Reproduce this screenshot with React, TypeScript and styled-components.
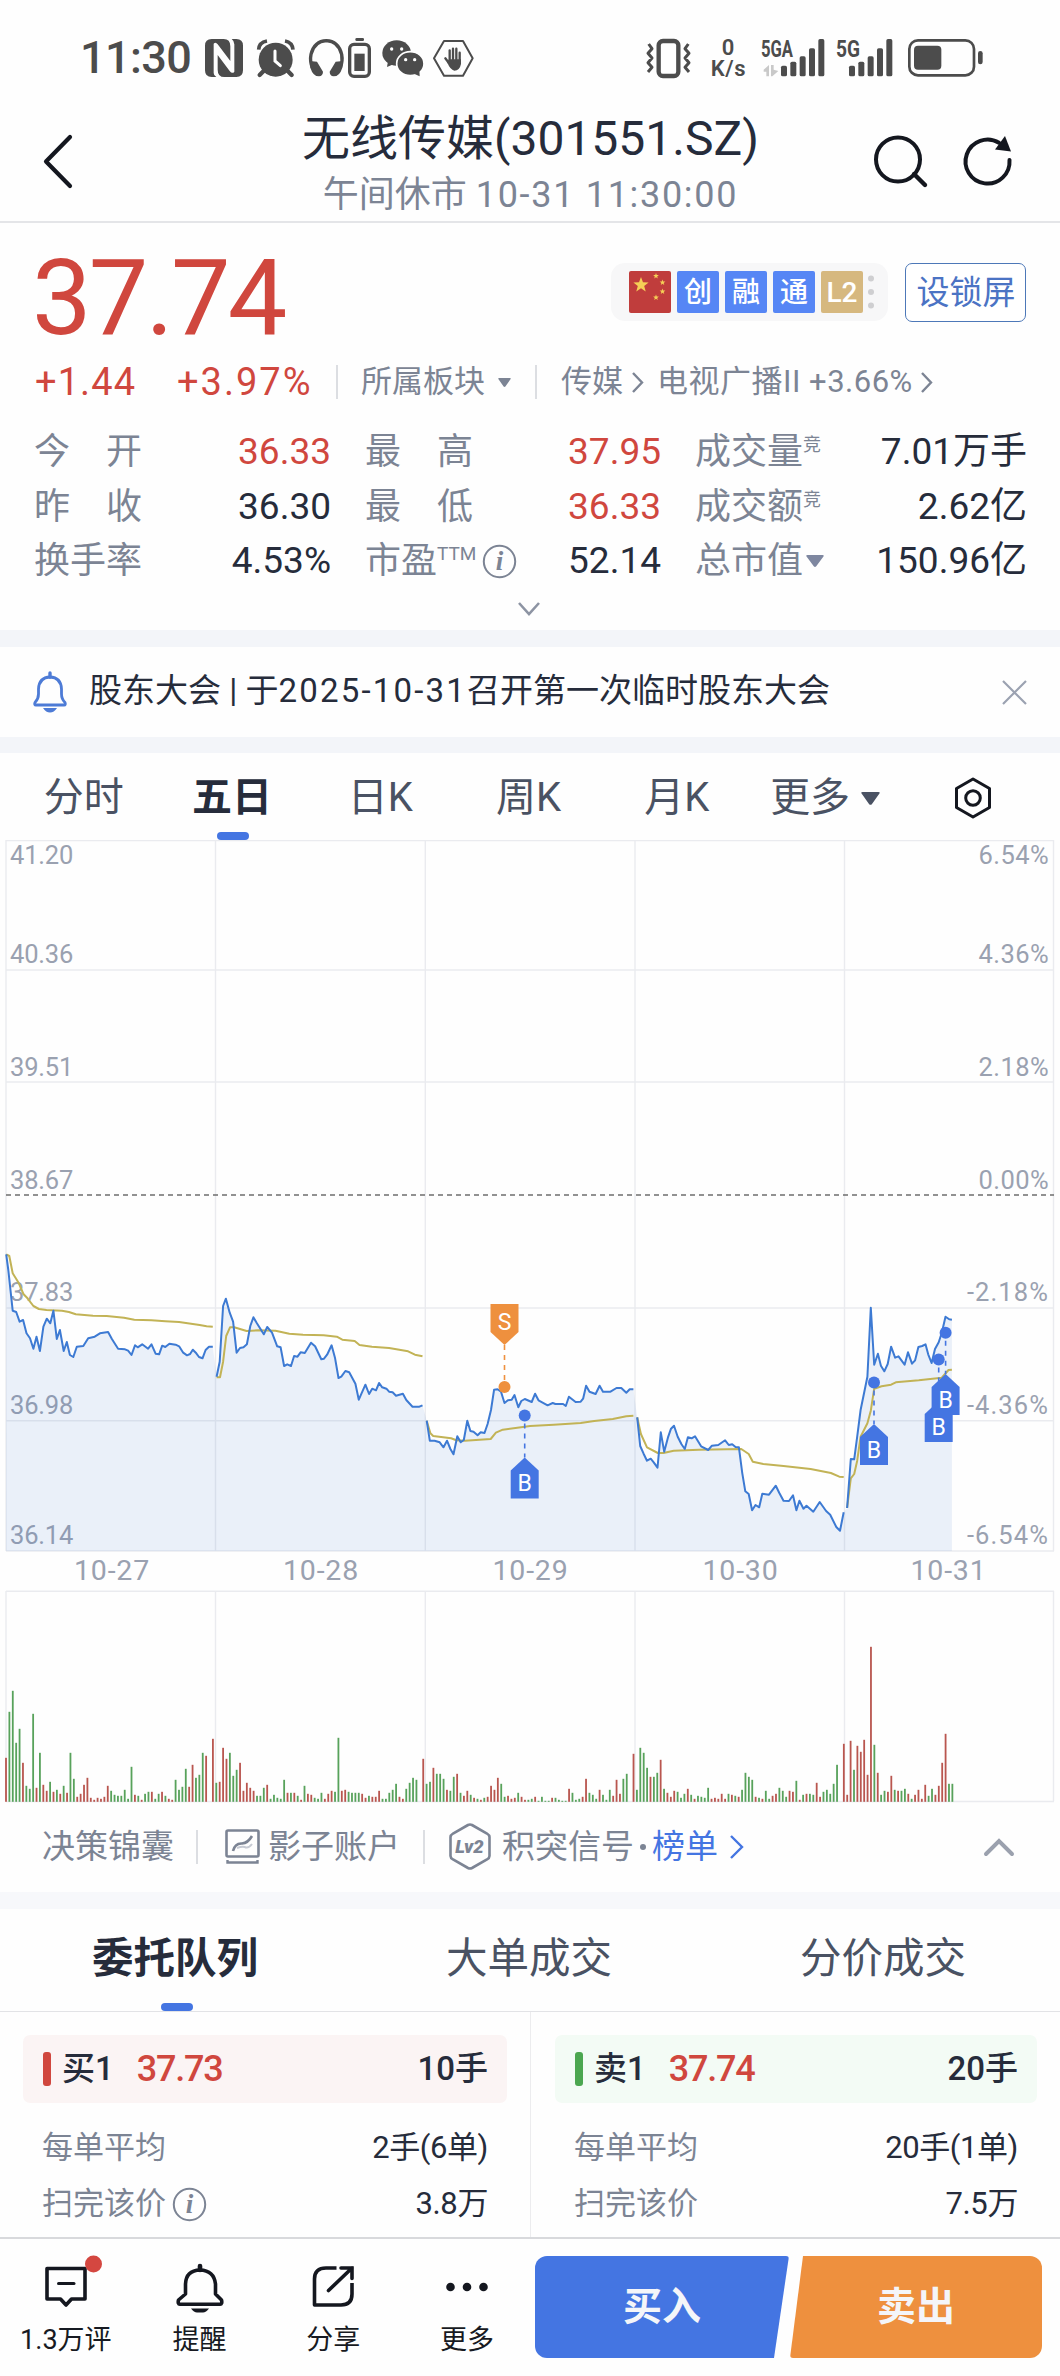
import React from 'react';
import styled, { createGlobalStyle, css } from 'styled-components';

const INK = '#262c3b';
const SLATE = '#4a5263';
const MUTED = '#7c8494';
const FAINT = '#9aa1b0';
const RED = '#d0473e';
const BLUE = '#4475e2';
const ORANGE = '#ee903e';
const GRID = '#eaebef';

const GlobalStyle = createGlobalStyle`
  *, *::before, *::after { box-sizing: border-box; }
  body { margin: 0; background: #fff; }
`;

const Page = styled.main`
  width: 1060px;
  height: 2376px;
  overflow: hidden;
  background: #fefefe;
  color: ${INK};
  font-family: Roboto, 'Noto Sans CJK SC', sans-serif;
  display: flex;
  flex-direction: column;
  white-space: nowrap;
`;

const Ico = styled.svg<{ $ml?: number }>`
  display: block;
  flex: none;
  overflow: visible;
  margin-left: ${(p) => p.$ml ?? 0}px;
`;

const Num = styled.span<{ $ls?: number; $ml?: number }>`
  letter-spacing: ${(p) => p.$ls ?? 1}px;
  margin-left: ${(p) => p.$ml ?? 0}px;
`;

/* ---------- status bar ---------- */

const StatusBar = styled.header`
  height: 116px;
  flex: none;
  display: flex;
  align-items: center;
  padding: 0 77px 0 80px;
  color: #4c4c4c;
`;

const Clock = styled.span`
  width: 125px;
  font-size: 45px;
  line-height: 50px;
  font-weight: 500;
  letter-spacing: -0.6px;
`;

const StatusRight = styled.div`
  margin-left: auto;
  display: flex;
  align-items: center;
`;

const Speed = styled.div`
  width: 40px;
  margin-left: 17px;
  display: flex;
  flex-direction: column;
  align-items: center;
  font-size: 22px;
  line-height: 21px;
  font-weight: 600;
  letter-spacing: 0.6px;
`;

const D = '#4c4c4c';

const Signal = ({ label, w, ml, arrows }: { label: string; w: number; ml: number; arrows?: boolean }) => {
  const bars = [32, 44, 60, 84, 112];
  const start = w - 130;
  return (
    <Ico $ml={ml} width={w / 3} height={38} viewBox={`0 0 ${w} 114`}>
      <text x="0" y="54" fontSize="70" fontWeight="700" fill={D} textLength={label.length * 32 + (arrows ? 0 : 8)} lengthAdjust="spacingAndGlyphs">{label}</text>
      {arrows && <path d="M8 92 L24 78 V112 H16 V98 H8 Z M30 78 H38 V92 L52 96 L34 112 H30 Z" fill="#c9c9c9" />}
      {bars.map((h, i) => (
        <rect key={i} x={start + i * 28} y={112 - h} width="18" height={h} rx="5" fill={D} />
      ))}
    </Ico>
  );
};

const Status = () => (
  <StatusBar>
    <Clock>11:30</Clock>
    <Ico width={38} height={38} viewBox="0 0 114 114">
      <path d="M20 0 H56 Q76 0 76 22 V66 L38 16 Q32 8 26 14 V102 Q26 110 34 114 H20 Q0 114 0 94 V20 Q0 0 20 0 Z" fill={D} />
      <path d="M80 0 H94 Q114 0 114 20 V94 Q114 114 94 114 H58 Q38 114 38 92 V48 L74 96 Q82 106 88 98 V16 Q88 6 80 0 Z" fill={D} />
    </Ico>
    <Ico $ml={14} width={38} height={38} viewBox="0 0 114 114">
      <circle cx="56" cy="62" r="51" fill={D} />
      <path d="M5 32 Q6 10 30 6 M84 6 Q106 10 108 32" fill="none" stroke={D} strokeWidth="11" />
      <path d="M22 94 L8 108 M90 94 L104 108" stroke={D} strokeWidth="13" strokeLinecap="round" />
      <path d="M54 36 V66 L70 80" fill="none" stroke="#fff" strokeWidth="9" strokeLinecap="round" />
    </Ico>
    <Ico $ml={14} width={35} height={38} viewBox="0 0 105 114">
      <path d="M10 86 Q2 66 6 46 Q16 6 52 5 Q88 6 98 46 Q102 66 94 86" fill="none" stroke={D} strokeWidth="10" />
      <path d="M2 66 L24 68 L42 98 Q42 110 30 112 Q12 112 4 86 Z M102 66 L80 68 L62 98 Q62 110 74 112 Q92 112 100 86 Z" fill={D} />
    </Ico>
    <Ico $ml={4} width={23} height={40} viewBox="0 0 69 120">
      <rect x="22" y="0" width="26" height="9" rx="4" fill={D} />
      <rect x="5" y="19" width="59" height="96" rx="13" fill="none" stroke={D} strokeWidth="10" />
      <rect x="19" y="47" width="31" height="52" fill={D} />
    </Ico>
    <Ico $ml={11} width={41} height={38} viewBox="0 0 123 114">
      <ellipse cx="44" cy="42" rx="43" ry="38" fill={D} />
      <path d="M18 66 L15 84 L38 74 Z" fill={D} />
      <ellipse cx="85" cy="74" rx="41" ry="36" fill={D} stroke="#fff" strokeWidth="5" />
      <path d="M96 104 L113 112 L112 92 Z" fill={D} />
      <g fill="#fff"><circle cx="29" cy="30" r="5" /><circle cx="59" cy="30" r="5" /><circle cx="71" cy="62" r="5" /><circle cx="98" cy="62" r="5" /></g>
    </Ico>
    <Ico $ml={10} width={41} height={37} viewBox="0 0 123 111">
      <path d="M33 3 H90 L119 55 L90 107 H33 L3 55 Z" fill="none" stroke={D} strokeWidth="6" strokeLinejoin="round" />
      <path d="M37 55 L47 68 M50 62 V31 M60 60 V26 M70 60 V26 M80 62 V38" fill="none" stroke={D} strokeWidth="7" strokeLinecap="round" />
      <path d="M42 60 L47 62 V58 H84 V72 Q80 92 64 92 Q52 90 42 66 Z" fill={D} />
    </Ico>
    <StatusRight>
      <Ico width={45} height={39} viewBox="0 0 135 117">
        <rect x="38" y="6" width="59" height="105" rx="13" fill="none" stroke={D} strokeWidth="13" />
        <path d="M8 15 L18 29 L6 43 L18 57 L6 71 L18 85 L6 99 M127 15 L117 29 L129 43 L117 57 L129 71 L117 85 L129 99" fill="none" stroke={D} strokeWidth="9" strokeLinejoin="round" />
      </Ico>
      <Speed><span>0</span><span>K/s</span></Speed>
      <Signal label="5GA" w={190} ml={13} arrows />
      <Signal label="5G" w={169} ml={11} />
      <Ico $ml={16} width={75} height={38} viewBox="0 0 225 114">
        <rect x="4" y="4" width="194" height="105" rx="26" fill="none" stroke={D} strokeWidth="8" />
        <rect x="18" y="20" width="82" height="72" rx="12" fill={D} />
        <rect x="210" y="36" width="14" height="40" rx="7" fill={D} />
      </Ico>
    </StatusRight>
  </StatusBar>
);

/* ---------- title bar ---------- */

const TitleBar = styled.div`
  height: 107px;
  flex: none;
  display: grid;
  grid-template-columns: 302px 1fr 302px;
  border-bottom: 2px solid #e4e5e8;
`;

const TitleSide = styled.div`
  display: flex;
  align-items: flex-start;
  padding: 18px 48px 0 42px;
`;

const TitleSideEnd = styled(TitleSide)`
  justify-content: flex-end;
  gap: 36px;
`;

const Titles = styled.div`
  display: flex;
  flex-direction: column;
  align-items: center;
`;

const Title = styled.h1`
  margin: -2px 0 0;
  font-size: 48px;
  line-height: 50px;
  font-weight: 400;
`;

const Subtitle = styled.div`
  margin-top: 6px;
  font-size: 36px;
  line-height: 50px;
  color: ${MUTED};
`;

/* ---------- quote ---------- */

const Quote = styled.section`
  height: 407px;
  flex: none;
  display: flex;
  flex-direction: column;
  padding: 0 34px 0 35px;
`;

const QuoteTop = styled.div`
  height: 130px;
  display: flex;
  align-items: flex-start;
  padding-top: 40px;
`;

const Price = styled.div`
  margin-top: -25px;
  margin-left: -3px;
  margin-right: auto;
  color: ${RED};
  font-size: 106px;
  line-height: 120px;
  letter-spacing: -2.7px;
`;

const Badges = styled.div`
  width: 277px;
  height: 58px;
  border-radius: 14px;
  background: #f7f7f8;
  display: flex;
  align-items: center;
  gap: 6px;
  padding-left: 18px;
`;

const Badge = styled.span<{ $bg: string }>`
  width: 42px;
  height: 42px;
  border-radius: 2px;
  background: ${(p) => p.$bg};
  color: #fff;
  font-size: 28px;
  line-height: 43px;
  font-weight: 500;
  text-align: center;
`;

const LockButton = styled.button`
  width: 121px;
  height: 59px;
  margin-left: 17px;
  padding: 0 0 5px 1px;
  border: 1px solid #4d78b8;
  border-radius: 7px;
  background: #fff;
  color: #4b73c4;
  font: 400 33px/40px 'Noto Sans CJK SC', sans-serif;
`;

const ChangeRow = styled.div`
  height: 58px;
  display: flex;
  align-items: center;
  color: ${MUTED};
  font-size: 31px;
  line-height: 40px;
`;

const Change = styled.span<{ $w: number; $ls: number }>`
  width: ${(p) => p.$w}px;
  color: ${RED};
  font-size: 38px;
  letter-spacing: ${(p) => p.$ls}px;
`;

const Rule = styled.i<{ $ml: number; $mr: number; $h?: number }>`
  width: 2px;
  height: ${(p) => p.$h ?? 34}px;
  flex: none;
  margin: 0 ${(p) => p.$mr}px 0 ${(p) => p.$ml}px;
  background: #dcdee2;
`;

const Facts = styled.div`
  margin-top: 14px;
  display: grid;
  grid-template-columns: 295px 294px 330px;
  column-gap: 36px;
  grid-auto-rows: 54.5px;
`;

const Fact = styled.div`
  display: flex;
  align-items: center;
  font-size: 36px;
  line-height: 50px;
`;

const FactLabel = styled.div<{ $spread?: boolean }>`
  display: flex;
  align-items: center;
  color: ${MUTED};
  margin-left: -1px;
  margin-right: auto;
  ${(p) => p.$spread && css`
    width: 108px;
    justify-content: space-between;
  `}
`;

const Sup = styled.sup<{ $size: number }>`
  align-self: flex-start;
  font-size: ${(p) => p.$size}px;
  line-height: 36px;
  vertical-align: baseline;
`;

const FactValue = styled.div<{ $red?: boolean }>`
  color: ${(p) => (p.$red ? RED : INK)};
  font-size: 37px;
  margin-right: -1px;
`;

const Expand = styled.div`
  display: flex;
  justify-content: center;
  padding: 13px 3px 0 0;
`;

const InfoIcon = ({ ml }: { ml: number }) => (
  <Ico $ml={ml} width={35} height={35} viewBox="0 0 35 35">
    <circle cx="17.5" cy="17.5" r="15.7" fill="none" stroke={MUTED} strokeWidth="2" />
    <text x="17.5" y="26" textAnchor="middle" fontFamily="Liberation Serif, serif" fontSize="27" fontStyle="italic" fontWeight="700" fill={MUTED}>i</text>
  </Ico>
);

const Caret = ({ w, h, ml, fill }: { w: number; h: number; ml: number; fill: string }) => (
  <Ico $ml={ml} width={w} height={h} viewBox="0 0 10 10" preserveAspectRatio="none">
    <path d="M0.8 0 H9.2 Q10.4 0 9.6 1.4 L5.7 9.4 Q5 10.4 4.3 9.4 L0.4 1.4 Q-0.4 0 0.8 0 Z" fill={fill} />
  </Ico>
);

const Chevron = ({ w, h, ml, stroke }: { w: number; h: number; ml: number; stroke: string }) => (
  <Ico $ml={ml} width={w} height={h} viewBox={`0 0 ${w} ${h}`}>
    <path d={`M1 1 L${w - 1} ${h / 2} L1 ${h - 1}`} fill="none" stroke={stroke} strokeWidth="2.4" />
  </Ico>
);

const star = (cx: number, cy: number, r: number) =>
  Array.from({ length: 10 }, (_, i) => {
    const a = (Math.PI / 5) * i - Math.PI / 2;
    const q = i % 2 ? r * 0.42 : r;
    return `${cx + q * Math.cos(a)},${cy + q * Math.sin(a)}`;
  }).join(' ');

const QuoteBlock = () => (
  <Quote>
    <QuoteTop>
      <Price>37.74</Price>
      <Badges>
        <Ico width={42} height={42} viewBox="0 0 42 42">
          <rect width="42" height="42" rx="2" fill="#c03d3c" />
          <g fill="#f5cf56">
            <polygon points={star(12, 14, 8)} />
            <polygon points={star(27, 5, 3)} />
            <polygon points={star(33.5, 11.5, 3)} />
            <polygon points={star(33.5, 20.5, 3)} />
            <polygon points={star(27, 26.5, 3)} />
          </g>
        </Ico>
        <Badge $bg="#5686f5">创</Badge>
        <Badge $bg="#5686f5">融</Badge>
        <Badge $bg="#5686f5">通</Badge>
        <Badge $bg="#d6b87f">L2</Badge>
        <Ico $ml={-1} width={6} height={34} viewBox="0 0 6 34">
          <g fill="#cfcfd1"><circle cx="3" cy="3.5" r="3" /><circle cx="3" cy="17" r="3" /><circle cx="3" cy="30.5" r="3" /></g>
        </Ico>
      </Badges>
      <LockButton>设锁屏</LockButton>
    </QuoteTop>
    <ChangeRow>
      <Change $w={142} $ls={1.1}>+1.44</Change>
      <Change $w={138} $ls={2}>+3.97%</Change>
      <Rule $ml={21} $mr={23} />
      <span>所属板块</span>
      <Caret w={13} h={9} ml={13} fill={MUTED} />
      <Rule $ml={24} $mr={24} />
      <span>传媒</span>
      <Chevron w={11} h={21} ml={9} stroke={MUTED} />
      <Num $ls={0.5} $ml={14}>电视广播II&nbsp;+3.66%</Num>
      <Chevron w={11} h={21} ml={8} stroke={MUTED} />
    </ChangeRow>
    <Facts>
      <Fact><FactLabel $spread><span>今</span><span>开</span></FactLabel><FactValue $red>36.33</FactValue></Fact>
      <Fact><FactLabel $spread><span>最</span><span>高</span></FactLabel><FactValue $red>37.95</FactValue></Fact>
      <Fact><FactLabel>成交量<Sup $size={18}>竞</Sup></FactLabel><FactValue>7.01万手</FactValue></Fact>
      <Fact><FactLabel $spread><span>昨</span><span>收</span></FactLabel><FactValue>36.30</FactValue></Fact>
      <Fact><FactLabel $spread><span>最</span><span>低</span></FactLabel><FactValue $red>36.33</FactValue></Fact>
      <Fact><FactLabel>成交额<Sup $size={18}>竞</Sup></FactLabel><FactValue>2.62亿</FactValue></Fact>
      <Fact><FactLabel>换手率</FactLabel><FactValue>4.53%</FactValue></Fact>
      <Fact><FactLabel>市盈<Sup $size={19}>TTM</Sup><InfoIcon ml={6} /></FactLabel><FactValue>52.14</FactValue></Fact>
      <Fact><FactLabel>总市值<Caret w={18} h={12} ml={3} fill="#7e87a0" /></FactLabel><FactValue>150.96亿</FactValue></Fact>
    </Facts>
    <Expand>
      <Ico width={22} height={14} viewBox="0 0 22 14"><path d="M1 1 L11 12 L21 1" fill="none" stroke="#8d94a3" strokeWidth="2.6" /></Ico>
    </Expand>
  </Quote>
);

const Gap = styled.div<{ $h: number; $c?: string }>`
  height: ${(p) => p.$h}px;
  flex: none;
  background: ${(p) => p.$c ?? '#f3f5f9'};
`;

/* ---------- notice ---------- */

const Notice = styled.section`
  height: 90px;
  flex: none;
  display: flex;
  align-items: center;
  padding: 0 33px 0 32px;
  font-size: 33px;
  line-height: 50px;
`;

const NoticeText = styled.p`
  margin: -2px auto 0 21px;
`;

/* ---------- period tabs ---------- */

const Periods = styled.nav`
  height: 87px;
  flex: none;
  display: grid;
  grid-template-columns: repeat(7, 148.3px);
  padding-left: 11px;
`;

const tabText = css<{ $on?: boolean }>`
  position: relative;
  display: flex;
  align-items: center;
  justify-content: center;
  color: ${(p) => (p.$on ? INK : SLATE)};
  font-weight: ${(p) => (p.$on ? 700 : 400)};
  ${(p) => p.$on && css`
    &::after {
      content: '';
      position: absolute;
      left: 50%;
      bottom: 0;
      width: 32px;
      height: 8px;
      margin-left: -16px;
      border-radius: 4px;
      background: ${BLUE};
    }
  `}
`;

const Period = styled.div<{ $on?: boolean }>`
  ${tabText}
  font-size: 40px;
  line-height: 60px;
  padding: 3px 3px 0 0;
`;

/* ---------- chart ---------- */

type Pt = [number, number];
const pairs = (s: string): Pt[] => s.trim().split(/\s+/).map((p) => p.split(',').map(Number) as Pt);
const west = (s: string): Pt[] => pairs(s).map(([x, y]) => [x / 2.904, y / 3 + 380]);
const east = (s: string): Pt[] => pairs(s).map(([x, y]) => [530 + x / 2.958, y / 3 + 380]);

const price: Pt[][] = [
  west(`18,103 24,150 37,272 47,276 57,305 67,300 77,340 87,355 97,386 106,350 116,393 126,320 136,296 146,310 155,272 165,357 174,330 185,393 194,366 203,405 213,411 223,380 242,378 256,355 275,350 290,340 314,336 325,357 343,386 363,388 372,392 382,405 392,376 400,382 413,373 430,386 440,373 452,401 462,403 471,377 480,381 492,371 510,374 520,379 532,398 543,406 552,402 560,389 570,400 578,411 588,415 597,390 607,380 618,380`),
  west(`629,470 638,425 648,258 656,236 667,278 677,305 687,398 697,384 707,382 717,373 727,318 736,292 746,310 766,343 776,321 790,338 805,379 815,382 825,438 834,433 845,438 854,408 864,410 873,397 885,399 903,368 915,379 933,418 941,416 950,404 963,376 973,415 983,474 991,470 1003,453 1014,457 1032,491 1042,539 1061,494 1072,522 1081,506 1092,511 1101,489 1110,502 1122,506 1130,515 1140,517 1150,527 1170,521 1180,540 1198,560 1218,560 1227,556`),
  [
    ...west(`1239,602 1248,662 1262,662 1277,667 1288,682 1298,662 1308,687 1317,703 1328,649 1338,667 1347,660 1357,602 1366,633 1375,635 1387,646 1396,637 1407,639 1416,612 1426,570 1435,509 1445,508 1455,515 1465,549 1475,541 1486,539 1494,525 1505,562 1514,543 1524,537 1544,546`),
    ...east(`15,521 25,541 52,556 67,549 75,552 98,552 106,558 115,530 135,546 150,545 157,536 166,497 176,515 194,522 206,497 216,515 238,515 256,504 270,504 285,518 295,508 306,508`),
  ],
  east(`317,592 326,678 336,701 346,722 357,716 366,727 377,743 387,637 397,695 408,653 417,626 426,617 437,650 448,673 458,687 467,652 478,655 488,649 506,679 527,690 538,677 557,675 577,661 588,675 598,673 608,681 618,682 628,760 637,814 647,822 657,871 667,855 678,862 687,821 707,824 727,797 737,818 750,842 766,843 778,826 788,871 797,842 809,866 818,857 838,875 857,846 876,873 888,884 906,921 917,932 928,877`),
  east(`938,864 949,717 959,718 968,650 978,570 998,470 1008,263 1018,434 1029,401 1038,437 1048,454 1058,432 1068,380 1080,413 1090,409 1108,434 1118,397 1130,431 1139,421 1149,381 1160,378 1170,373 1178,403 1188,429 1198,387 1209,367 1218,338 1229,290 1240,298 1248,299`),
];

const average: Pt[][] = [
  west(`18,103 27,108 37,160 55,190 68,222 80,235 97,258 113,267 135,270 180,272 200,276 220,283 270,287 310,288 360,293 390,299 440,301 480,304 520,306 560,312 580,315 600,319 618,320`),
  west(`629,472 639,472 648,425 657,348 668,322 680,322 716,333 750,331 800,332 840,341 880,344 940,346 978,350 994,359 1030,363 1044,375 1080,380 1130,384 1185,394 1205,404 1227,409`),
  [
    ...west(`1239,602 1250,640 1258,648 1310,655 1325,661 1350,662 1425,657 1440,638 1460,629 1524,620`),
    ...east(`0,618 70,614 150,609 190,603 245,597 285,589 306,587`),
  ],
  east(`317,592 328,642 346,682 378,699 395,699 425,692 500,689 625,687 647,702 659,725 690,732 750,738 830,747 890,759 915,770 928,771`),
  east(`938,864 949,775 959,762 968,722 978,650 998,610 1008,572 1018,506 1040,499 1068,494 1082,487 1150,481 1218,473 1238,450 1248,449`),
];

const path = (pts: Pt[]) => pts.map(([x, y], i) => `${i ? 'L' : 'M'}${x.toFixed(1)} ${y.toFixed(1)}`).join('');

/* Five-minute volumes in pixels: positive closes up (red), negative closes down (green), 0 is the break between days. */
const volumes = [
  44, -90, -111, -59, -73, 39, -16, -13, -88, 14, -49, 17, 11, -20, 10, -12, 8, -16, 9, -49, -23, 5, 8, 17, 24, 4, 2, 4, 3, 5, 16,
  -11, -7, -6, -6, -12, -3, -35, 7, -6, 2, -8, -10, 10, -3, -8, 10, -6, 3, 2, -22, -12, -15, -33, 15, 37, -24, -27, -49, 46, 0,
  63, -19, 20, 54, 43, -49, -26, -32, 39, 11, 19, 14, 11, -6, -6, -14, 17, -3, -7, -4, -3, -22, 9, -9, 9, -6, 2, -16, 8, 7, -4, -3,
  -9, 3, 8, 11, -10, -64, 11, 12, -10, -9, -9, -9, 8, 4, -6, 5, 5, 11, -3, -3, -9, -12, -18, 5, 3, -13, -19, -24, -22, 0,
  43, -18, -20, 34, -28, -28, -23, 12, -11, -25, 28, -9, 6, 11, -7, 4, -3, 2, -4, 5, 16, 12, 24, -18, -5, 6, 3, 4, -9, 5, 2, -2, -3,
  5, -1, -5, -1, -1, 4, -4, -2, -1, -1, 13, -9, -2, -3, 5, 23, -9, -7, -3, 12, -7, -2, -12, 6, 22, 8, -23, -28, 0,
  48, -12, -54, -49, -34, 25, -25, -29, 42, -13, 9, 5, 11, -10, -4, -8, 13, -7, 3, -6, -5, -4, -14, 3, 4, 3, 8, 3, -8, 7, -6, 5,
  -12, -29, -25, -22, 5, -4, 3, -11, -3, 6, 8, -14, -11, -5, 11, 10, -21, 2, -7, 8, -8, -7, 19, 5, -10, -12, -8, -18, -37, 0,
  58, 7, 61, -32, 56, 50, 62, 27, 155, -57, 29, -7, -11, 10, 26, -12, 11, -11, -13, 8, -3, 7, 12, 3, 17, -6, -13, 7, 16, 39, 68, -18, -18,
];

const columns = [6, 215.5, 425.3, 635, 844.5, 1053.5];
const rows = [0.5, 130, 242, 468, 580.7, 711];
const scale: [number, string, string][] = [
  [14.5, '41.20', '6.54%'],
  [114, '40.36', '4.36%'],
  [226.5, '39.51', '2.18%'],
  [339.5, '38.67', '0.00%'],
  [452, '37.83', '-2.18%'],
  [564.5, '36.98', '-4.36%'],
  [694.5, '36.14', '-6.54%'],
];
const dates: [number, string][] = [[112, '10-27'], [321, '10-28'], [530.5, '10-29'], [740.5, '10-30'], [948.5, '10-31']];

const ChartBox = styled.section`
  height: 964px;
  flex: none;
  svg { display: block; }
`;

const Buy = ({ x, dot, tip }: { x: number; dot: number; tip: number }) => (
  <g>
    <path d={`M${x} ${dot + 8} V${tip}`} stroke={BLUE} strokeWidth="1.6" strokeDasharray="5 5" />
    <circle cx={x} cy={dot} r="6" fill={BLUE} />
    <path d={`M${x} ${tip} L${x + 14} ${tip + 13} V${tip + 41} H${x - 14} V${tip + 13} Z`} fill={BLUE} />
    <text x={x} y={tip + 33.5} textAnchor="middle" fontSize="23" fill="#fff">B</text>
  </g>
);

const Chart = () => (
  <ChartBox>
    <svg width="1060" height="964" viewBox="0 0 1060 964" fontFamily="Roboto, sans-serif">
      <g stroke={GRID} strokeWidth="1.4">
        {columns.map((x) => <path key={x} d={`M${x} 0 V711 M${x} 751 V961`} />)}
        {rows.map((y) => <path key={y} d={`M6 ${y} H1054`} />)}
        <path d="M6 751.3 H1054 M6 961.5 H1054" />
      </g>
      <g fill={FAINT} fontSize="25.5">
        {scale.map(([y, l, r]) => (
          <React.Fragment key={y}>
            <text x="10" y={y + 9} letterSpacing="-0.2">{l}</text>
            <text x="1049" y={y + 9} textAnchor="end" letterSpacing={y > 400 ? 1.1 : 0.4}>{r}</text>
          </React.Fragment>
        ))}
        {dates.map(([x, d]) => <text key={d} x={x} y="740" textAnchor="middle" fontSize="28.5" letterSpacing="0.8">{d}</text>)}
      </g>
      <path d={`${path(price.flat())} V711 H6 Z`} fill="#3d74cc" fillOpacity="0.1" />
      <path d="M6 355 H1054" stroke="#6d6d6d" strokeWidth="1.5" strokeDasharray="5 4" />
      <g fill="none" strokeWidth="2" strokeLinejoin="round">
        {average.map((s, i) => <path key={i} d={path(s)} stroke="#c2b356" />)}
        {price.map((s, i) => <path key={i} d={path(s)} stroke="#3d7ad3" />)}
      </g>
      <g>
        <path d="M504.5 505 V541" stroke={ORANGE} strokeWidth="1.6" strokeDasharray="5 5" />
        <circle cx="504.5" cy="547" r="6" fill={ORANGE} />
        <path d="M490.5 464 H518.5 V492 L504.5 505 L490.5 492 Z" fill={ORANGE} />
        <text x="504.5" y="490" textAnchor="middle" fontSize="23" fill="#fff">S</text>
      </g>
      <Buy x={524.7} dot={575.5} tip={617.5} />
      <Buy x={874} dot={542.5} tip={584} />
      <Buy x={938.7} dot={519.5} tip={561} />
      <Buy x={945.6} dot={492.7} tip={534} />
      {volumes.map((v, i) => v !== 0 && (
        <rect key={i} x={5.1 + i * 3.392} y={961.8 - Math.abs(v)} width="1.8" height={Math.abs(v)} fill={v > 0 ? '#b9564f' : '#58a25b'} />
      ))}
    </svg>
  </ChartBox>
);

/* ---------- tool strip ---------- */

const Tools = styled.section`
  height: 88px;
  flex: none;
  display: flex;
  align-items: center;
  padding: 0 46px 3px 42px;
  color: ${MUTED};
  font-size: 33px;
  line-height: 50px;
`;

const ToolText = styled.span<{ $ml?: number; $blue?: boolean }>`
  margin-left: ${(p) => p.$ml ?? 0}px;
  ${(p) => p.$blue && css`color: ${BLUE};`}
`;

/* ---------- order queue ---------- */

const QueueTabs = styled.nav`
  height: 103px;
  flex: none;
  display: grid;
  grid-template-columns: repeat(3, 354px);
  margin-right: -2px;
  border-bottom: 1px solid #e2e3e6;
`;

const QueueTab = styled.div<{ $on?: boolean }>`
  ${tabText}
  font-size: 41.5px;
  line-height: 60px;
  padding: 0 4px 2px 0;
`;

const Queue = styled.section`
  height: 225px;
  flex: none;
  display: grid;
  grid-template-columns: 531px 529px;
`;

const Side = styled.div<{ $left?: boolean }>`
  display: flex;
  flex-direction: column;
  padding: ${(p) => (p.$left ? '23px 23px 0' : '23px 23px 0 24px')};
  ${(p) => p.$left && css`border-right: 1px solid #ececee;`}
`;

const Best = styled.div<{ $bg: string }>`
  height: 68px;
  border-radius: 7px;
  background: ${(p) => p.$bg};
  display: flex;
  align-items: center;
  padding: 0 19px 1px 20px;
  font-size: 33px;
  line-height: 50px;
  font-weight: 500;
`;

const Mark = styled.i<{ $c: string }>`
  width: 8px;
  height: 34px;
  margin-right: 11px;
  border-radius: 3px;
  background: ${(p) => p.$c};
`;

const BestPrice = styled.span`
  margin: 0 auto 0 23px;
  color: ${RED};
  font-size: 36px;
  letter-spacing: -1.2px;
`;

const Line = styled.div<{ $mt?: number }>`
  margin-top: ${(p) => p.$mt ?? 0}px;
  height: 56px;
  display: flex;
  align-items: center;
  justify-content: space-between;
  padding: 0 19px;
  font-size: 31px;
  line-height: 50px;
`;

const LineLabel = styled.span`
  display: flex;
  align-items: center;
  color: ${MUTED};
`;

const LineValue = styled.span`
  letter-spacing: -0.4px;
`;

/* ---------- bottom bar ---------- */

const Bottom = styled.footer`
  height: 139px;
  flex: none;
  display: flex;
  border-top: 2px solid #d8d9dc;
`;

const Actions = styled.div`
  width: 535px;
  display: grid;
  grid-template-columns: repeat(4, 133.7px);
`;

const Action = styled.div`
  display: flex;
  flex-direction: column;
  align-items: center;
  padding: 18px 2px 0 0;
  color: #171a22;
  font-size: 27px;
  line-height: 40px;
  gap: 13px;
`;

const Trade = styled.div`
  display: flex;
  padding-top: 17px;
`;

const TradeButton = styled.button<{ $side: 'buy' | 'sell' }>`
  width: ${(p) => (p.$side === 'buy' ? 254 : 252)}px;
  height: 102px;
  border: 0;
  margin-left: ${(p) => (p.$side === 'buy' ? 0 : 1)}px;
  padding: 0 0 9px;
  color: #f4f5f9;
  font: 700 39px/60px 'Noto Sans CJK SC', sans-serif;
  background: ${(p) => (p.$side === 'buy' ? BLUE : ORANGE)};
  border-radius: ${(p) => (p.$side === 'buy' ? '12px 3px 3px 12px' : '3px 12px 12px 3px')};
  clip-path: ${(p) => (p.$side === 'buy' ? 'polygon(0 0, 100% 0, 239px 100%, 0 100%)' : 'polygon(13px 0, 100% 0, 100% 100%, 0 100%)')};
`;

const K = '#14171f';
const BELL = 'M1.5 36 Q0.5 40 3 40.3 H43 Q45.5 40 44.5 36 L38.5 30 V20 Q37 6.5 23 6 Q9 6.5 8.5 20 V30 Z';

export default function App() {
  return (
    <Page>
      <GlobalStyle />
      <Status />
      <TitleBar>
        <TitleSide>
          <Ico width={30} height={54} viewBox="0 0 30 54"><path d="M28 3 L4 27.5 L28 52" fill="none" stroke={K} strokeWidth="4.2" strokeLinejoin="round" strokeLinecap="round" /></Ico>
        </TitleSide>
        <Titles>
          <Title>无线传媒(301551.SZ)</Title>
          <Subtitle>午间休市 <Num $ls={1.7}>10-31 11:30:00</Num></Subtitle>
        </Titles>
        <TitleSideEnd>
          <Ico width={54} height={54} viewBox="0 0 54 54">
            <circle cx="25" cy="25.5" r="22" fill="none" stroke={K} strokeWidth="4" />
            <path d="M41 40 L52 51" stroke={K} strokeWidth="4.4" strokeLinecap="round" />
          </Ico>
          <Ico width={50} height={54} viewBox="0 0 50 54">
            <path d="M46.5 26 A22 22 0 1 1 36 8.8" fill="none" stroke={K} strokeWidth="4" strokeLinecap="round" />
            <path d="M42 2 L48 17.5 L32 15.5 Z" fill={K} />
          </Ico>
        </TitleSideEnd>
      </TitleBar>
      <QuoteBlock />
      <Gap $h={17} />
      <Notice>
        <Ico width={36} height={41} viewBox="0 0 36 41">
          <path d="M3 30.5 Q6.5 27 6.5 22 V17 Q7 5.5 18 5 Q29 5.5 29.5 17 V22 Q29.5 27 33 30.5 Q34 33 32 33 H4 Q2 33 3 30.5 Z" fill="none" stroke="#4d7bd6" strokeWidth="2.8" strokeLinejoin="round" />
          <path d="M18 1 V5" stroke="#4d7bd6" strokeWidth="3.4" strokeLinecap="round" />
          <path d="M11 36 H25 Q22 40.5 18 40.5 Q14 40.5 11 36 Z" fill="#4d7bd6" />
        </Ico>
        <NoticeText>股东大会 | 于<Num $ls={2.2}>2025-10-31</Num>召开第一次临时股东大会</NoticeText>
        <Ico width={25} height={25} viewBox="0 0 25 25"><path d="M1 1 L24 24 M24 1 L1 24" stroke="#9ba2b1" strokeWidth="2.2" /></Ico>
      </Notice>
      <Gap $h={16} />
      <Periods>
        <Period>分时</Period>
        <Period $on>五日</Period>
        <Period>日K</Period>
        <Period>周K</Period>
        <Period>月K</Period>
        <Period>更多<Caret w={19} h={13} ml={11} fill={SLATE} /></Period>
        <Period>
          <Ico width={38} height={42} viewBox="0 0 38 42">
            <path d="M19 2 L35.5 11.5 V30.5 L19 40 L2.5 30.5 V11.5 Z" fill="none" stroke={K} strokeWidth="3" strokeLinejoin="round" />
            <circle cx="19" cy="21" r="7.3" fill="none" stroke={K} strokeWidth="3" />
          </Ico>
        </Period>
      </Periods>
      <Chart />
      <Tools>
        <ToolText>决策锦囊</ToolText>
        <Rule $ml={22} $mr={27} />
        <Ico width={35} height={35} viewBox="0 0 35 35">
          <rect x="1.5" y="1.5" width="32" height="26" rx="1.5" fill="none" stroke={MUTED} strokeWidth="2.6" />
          <path d="M2.5 31 V33.5 H32.5 V31" fill="none" stroke={MUTED} strokeWidth="2.4" />
          <path d="M8 22 Q10 14 17 14.5 Q23 14 27 7" fill="none" stroke={MUTED} strokeWidth="2.6" />
          <path d="M12 19 Q18 17 21 18.5 Q24 19 27 15" fill="none" stroke="#c6cad3" strokeWidth="2" />
        </Ico>
        <ToolText $ml={8}>影子账户</ToolText>
        <Rule $ml={23} $mr={24} />
        <Ico width={42} height={47} viewBox="0 0 42 47">
          <path d="M19 2 Q21 1 23 2 L38 10.5 Q40.5 12 40.5 14 V33 Q40.5 35 38 36.5 L23 45 Q21 46 19 45 L4 36.5 Q1.5 35 1.5 33 V14 Q1.5 12 4 10.5 Z" fill="none" stroke={MUTED} strokeWidth="2.6" />
          <text x="20.5" y="30" textAnchor="middle" fontSize="18.5" fontStyle="italic" fontWeight="900" fill={MUTED}>Lv2</text>
        </Ico>
        <ToolText $ml={11}>积突信号</ToolText>
        <Ico $ml={6} width={6} height={6} viewBox="0 0 6 6"><circle cx="3" cy="3" r="3" fill={MUTED} /></Ico>
        <ToolText $ml={6} $blue>榜单</ToolText>
        <Chevron w={13} h={24} ml={12} stroke={BLUE} />
        <Ico $ml={241} width={30} height={18} viewBox="0 0 30 18"><path d="M2 16 L15 3 L28 16" fill="none" stroke="#9ba1ae" strokeWidth="4" strokeLinecap="round" /></Ico>
      </Tools>
      <Gap $h={17} $c="#f7f8fb" />
      <QueueTabs>
        <QueueTab $on>委托队列</QueueTab>
        <QueueTab>大单成交</QueueTab>
        <QueueTab>分价成交</QueueTab>
      </QueueTabs>
      <Queue>
        <Side $left>
          <Best $bg="#fbf4f4"><Mark $c={RED} />买1<BestPrice>37.73</BestPrice>10手</Best>
          <Line $mt={17}><LineLabel>每单平均</LineLabel><LineValue>2手(6单)</LineValue></Line>
          <Line><LineLabel>扫完该价<InfoIcon ml={6} /></LineLabel><LineValue>3.8万</LineValue></Line>
        </Side>
        <Side>
          <Best $bg="#f3fbf5"><Mark $c="#4ba650" />卖1<BestPrice>37.74</BestPrice>20手</Best>
          <Line $mt={17}><LineLabel>每单平均</LineLabel><LineValue>20手(1单)</LineValue></Line>
          <Line><LineLabel>扫完该价</LineLabel><LineValue>7.5万</LineValue></Line>
        </Side>
      </Queue>
      <Bottom>
        <Actions>
          <Action>
            <Ico width={42} height={50} viewBox="0 0 42 50">
              <path d="M2 11.5 H40 V42 H26.5 L21 48 L15.5 42 H2 Z" fill="none" stroke={K} strokeWidth="3.6" strokeLinejoin="round" />
              <path d="M13.5 26.5 H29" stroke={K} strokeWidth="3" strokeLinecap="round" />
              <circle cx="48.5" cy="7" r="8.5" fill="#d44740" />
            </Ico>
            <span>1.3万评</span>
          </Action>
          <Action>
            <Ico width={46} height={50} viewBox="0 -6 46 50">
              <g transform="translate(0 1)">
                <path d={BELL} fill="none" stroke={K} strokeWidth="3.6" strokeLinejoin="round" />
                <path d="M23 2 V6" stroke={K} strokeWidth="4.6" strokeLinecap="round" />
                <path d="M14 44.5 H32 Q29 48.5 26 48.5 H20 Q17 48.5 14 44.5 Z" fill={K} />
              </g>
            </Ico>
            <span>提醒</span>
          </Action>
          <Action>
            <Ico width={42} height={50} viewBox="0 0 42 50">
              <path d="M24.5 11 H14 Q2.5 11 2.5 22 V48 H29 Q40 48 40 37 V26" fill="none" stroke={K} strokeWidth="3.6" strokeLinejoin="round" />
              <path d="M29 11 H40 V21.5 M40 11 L16.5 33.5" fill="none" stroke={K} strokeWidth="3.6" strokeLinecap="round" />
            </Ico>
            <span>分享</span>
          </Action>
          <Action>
            <Ico width={42} height={50} viewBox="0 0 42 50">
              <g fill={K}><circle cx="4.5" cy="30" r="4.3" /><circle cx="21" cy="30" r="4.3" /><circle cx="37.5" cy="30" r="4.3" /></g>
            </Ico>
            <span>更多</span>
          </Action>
        </Actions>
        <Trade>
          <TradeButton $side="buy">买入</TradeButton>
          <TradeButton $side="sell">卖出</TradeButton>
        </Trade>
      </Bottom>
    </Page>
  );
}
